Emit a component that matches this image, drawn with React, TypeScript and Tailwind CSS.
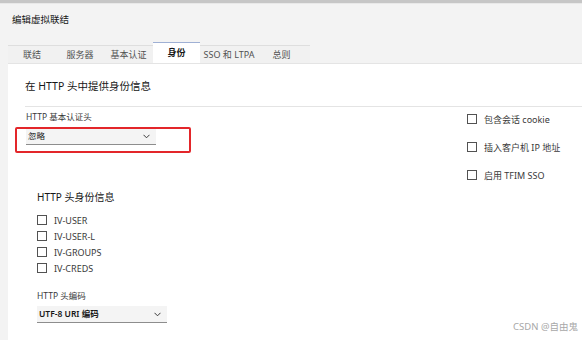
import React from 'react';

const tabs = [
	{ label: '联结', w: 'w-[48px]' },
	{ label: '服务器', w: 'w-[48px]' },
	{ label: '基本认证', w: 'w-[49px]' },
	{ label: '身份', w: 'w-[47px]', active: true },
	{ label: 'SSO 和 LTPA', w: 'w-[58px]' },
	{ label: '总则', w: 'w-[47px]' }
];

const headers = ['IV-USER', 'IV-USER-L', 'IV-GROUPS', 'IV-CREDS'];
const options = ['包含会话 cookie', '插入客户机 IP 地址', '启用 TFIM SSO'];

function Chevron() {
	return (
		<svg width="7" height="5" viewBox="0 0 7 5" className="shrink-0">
			<polyline points="0.5,0.8 3.5,3.8 6.5,0.8" fill="none" stroke="#393939" strokeWidth="1" />
		</svg>
	);
}

function Checkbox({ label }: { label: string }) {
	return (
		<div className="flex h-[16px] items-center gap-[7px]">
			<div className="h-[10px] w-[10px] shrink-0 border border-[#525252] bg-white" />
			<span className="text-[9px] leading-[11px] text-[#393939]">{label}</span>
		</div>
	);
}

export default function App() {
	return (
		<div
			className="relative flex h-[340px] w-[582px] flex-col overflow-hidden bg-[#f3f3f3]"
			style={{ fontFamily: '"Noto Sans", "Noto Sans CJK SC", sans-serif' }}
		>
			<div className="h-[3px] bg-[#c6c6c6]" />
			<div className="h-px bg-[#e8e8e8]" />
			<div className="pl-[12px] pt-[10px] text-[9.5px] leading-[12px] text-[#161616]">编辑虚拟联结</div>

			{/* tabs */}
			<div className="ml-[8px] mt-[16px] flex h-[21px] items-end">
				{tabs.map((t) =>
					t.active ? (
						<div
							key={t.label}
							className={`${t.w} flex h-[21px] items-center justify-center border-t border-[#9fb0d4] bg-white text-[9px] font-bold text-[#161616]`}
						>
							{t.label}
						</div>
					) : (
						<div
							key={t.label}
							className={`${t.w} flex h-[18px] items-center justify-center border-t border-[#dedede] bg-[#f1f1f1] text-[9px] text-[#525252]`}
						>
							{t.label}
						</div>
					)
				)}
				<div className="h-[18px] w-[5px] border-t border-[#dedede] bg-[#f1f1f1]" />
			</div>

			{/* panel */}
			<div className="ml-[8px] flex-1 border-t border-[#e4e4e4] bg-white">
				<div className="pl-[17px] pt-[15px] text-[10.5px] leading-[14px] text-[#161616]">在 HTTP 头中提供身份信息</div>
				<div className="ml-[17px] mt-[13px] h-px bg-[#e4e4e4]" />

				<div className="flex">
					<div className="flex-1 pl-[18px]">
						<div className="mt-[4px] text-[8.5px] leading-[11px] text-[#393939]">HTTP 基本认证头</div>
						<div className="mt-[6px] flex h-[17px] w-[130px] items-center justify-between border-b border-[#8d8d8d] bg-[#f4f4f4] pl-[2px] pr-[6px]">
							<span className="text-[8.5px] text-[#161616]">忽略</span>
							<Chevron />
						</div>

						<div className="pl-[11px]">
							<div className="mt-[46px] text-[10px] leading-[13px] text-[#161616]">HTTP 头身份信息</div>
							<div className="mt-[8px] flex flex-col">
								{headers.map((h) => (
									<Checkbox key={h} label={h} />
								))}
							</div>
							<div className="mt-[14px] text-[8.5px] leading-[11px] text-[#393939]">HTTP 头编码</div>
							<div className="mt-[5px] flex h-[17px] w-[130px] items-center justify-between border-b border-[#8d8d8d] bg-[#f4f4f4] pl-[2px] pr-[6px]">
								<span className="text-[8.5px] font-semibold text-[#161616]">UTF-8 URI 编码</span>
								<Chevron />
							</div>
						</div>
					</div>

					<div className="flex w-[115px] flex-col gap-[12px] pt-[4px]">
						{options.map((o) => (
							<Checkbox key={o} label={o} />
						))}
					</div>
				</div>
			</div>

			{/* annotation */}
			<div className="absolute left-[15px] top-[127px] h-[26px] w-[176px] rounded-[2px] border-2 border-[#e3262a]" />
			<div className="absolute bottom-[6px] right-[4px] text-[9.5px] text-[#a8a8a8]">CSDN @自由鬼</div>
		</div>
	);
}
